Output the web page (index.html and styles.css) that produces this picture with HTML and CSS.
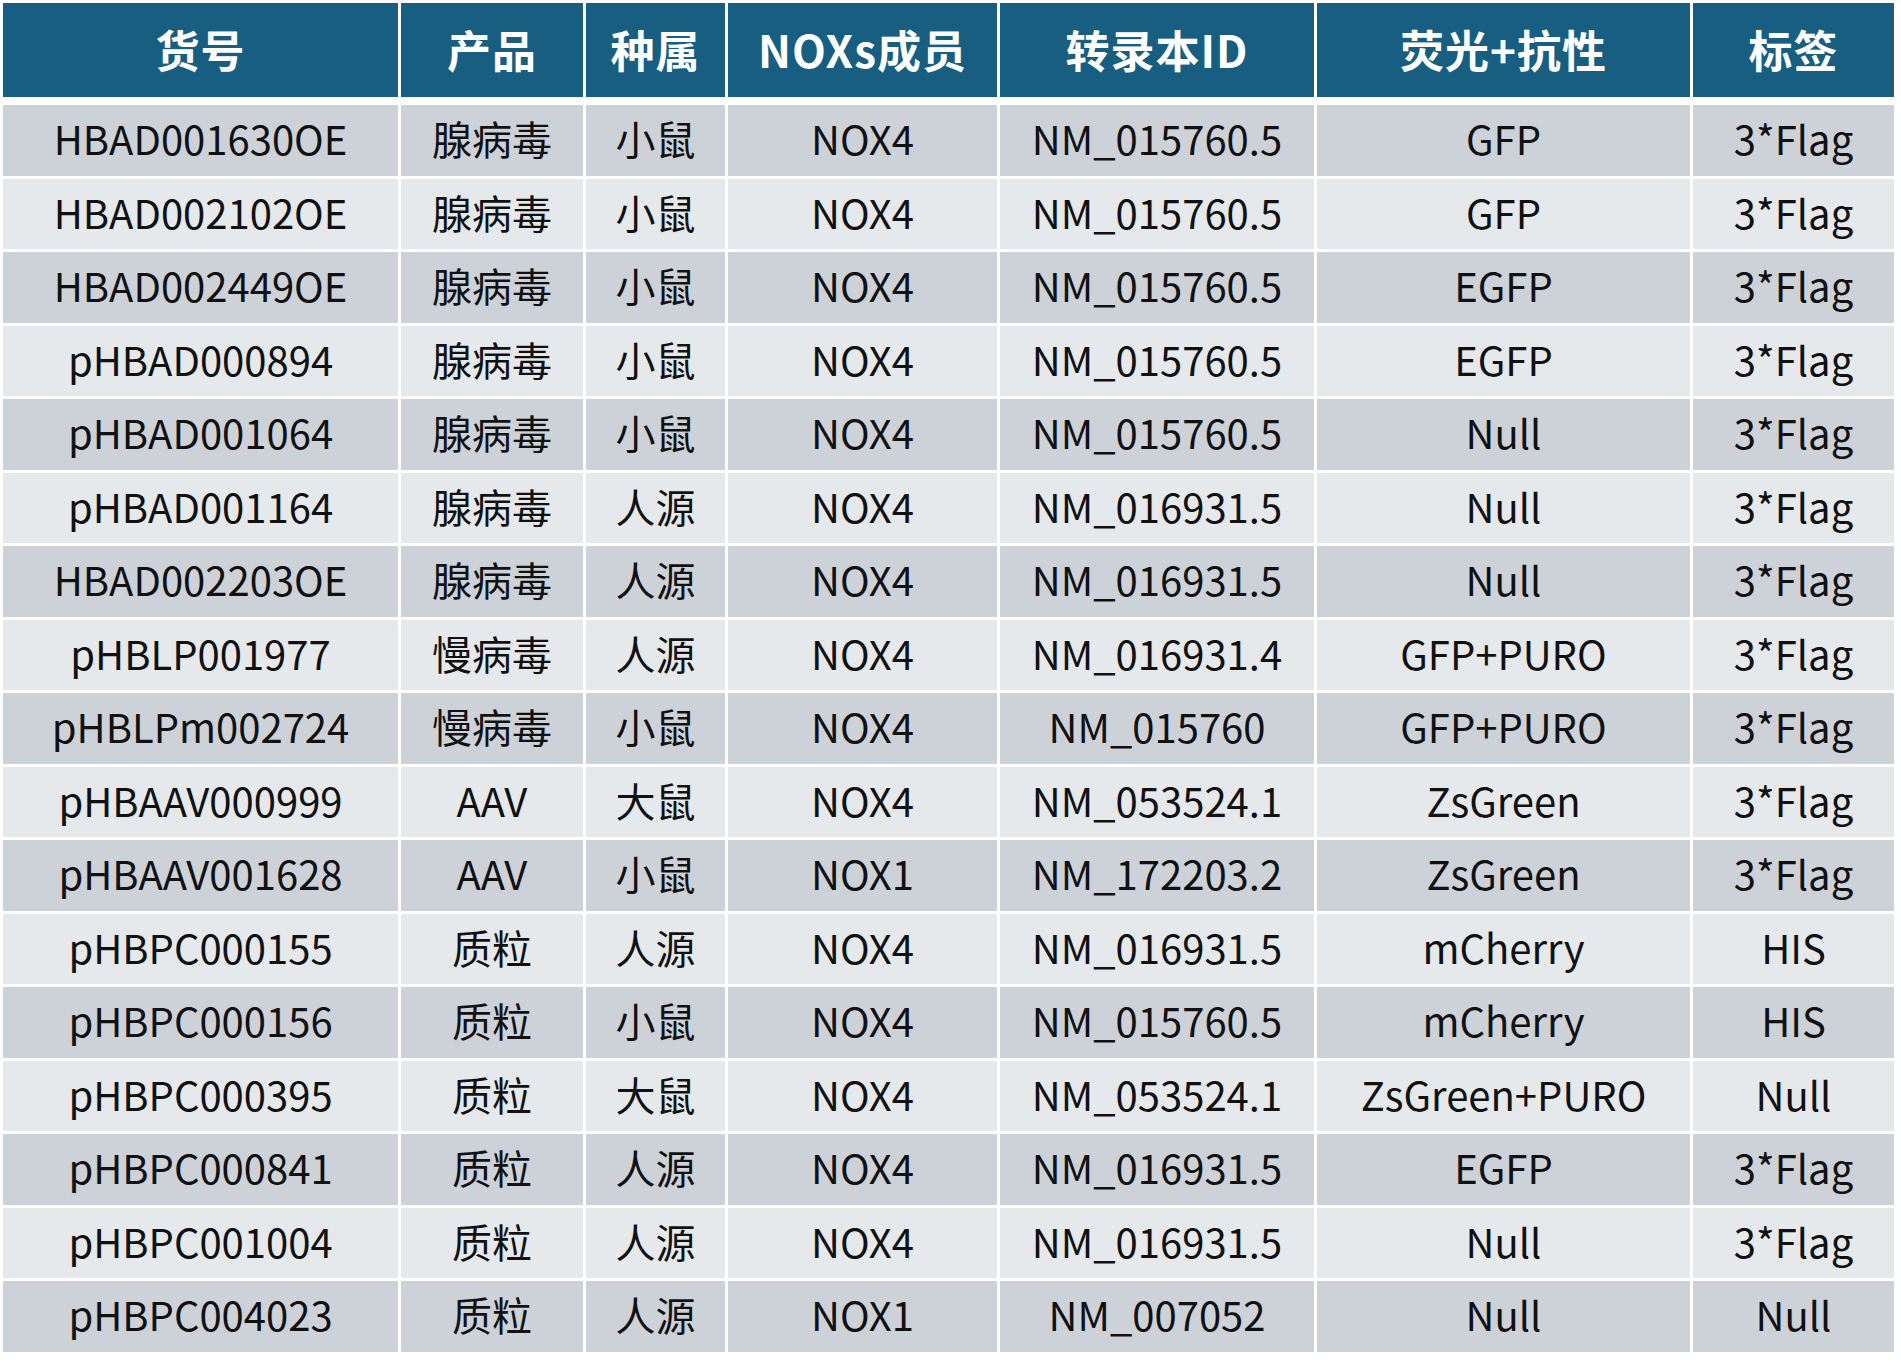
FILE: index.html
```html
<!DOCTYPE html>
<html lang="zh">
<head>
<meta charset="utf-8">
<title>NOX 产品列表</title>
<link rel="stylesheet" href="styles.css">
</head>
<body>
<div class="table">
  <div class="th">货号</div><div class="th">产品</div><div class="th">种属</div><div class="th">NOXs成员</div><div class="th">转录本ID</div><div class="th">荧光+抗性</div><div class="th">标签</div>

  <div class="td d">HBAD001630OE</div><div class="td d">腺病毒</div><div class="td d">小鼠</div><div class="td d">NOX4</div><div class="td d">NM_015760.5</div><div class="td d">GFP</div><div class="td d">3*Flag</div>
  <div class="td l">HBAD002102OE</div><div class="td l">腺病毒</div><div class="td l">小鼠</div><div class="td l">NOX4</div><div class="td l">NM_015760.5</div><div class="td l">GFP</div><div class="td l">3*Flag</div>
  <div class="td d">HBAD002449OE</div><div class="td d">腺病毒</div><div class="td d">小鼠</div><div class="td d">NOX4</div><div class="td d">NM_015760.5</div><div class="td d">EGFP</div><div class="td d">3*Flag</div>
  <div class="td l">pHBAD000894</div><div class="td l">腺病毒</div><div class="td l">小鼠</div><div class="td l">NOX4</div><div class="td l">NM_015760.5</div><div class="td l">EGFP</div><div class="td l">3*Flag</div>
  <div class="td d">pHBAD001064</div><div class="td d">腺病毒</div><div class="td d">小鼠</div><div class="td d">NOX4</div><div class="td d">NM_015760.5</div><div class="td d">Null</div><div class="td d">3*Flag</div>
  <div class="td l">pHBAD001164</div><div class="td l">腺病毒</div><div class="td l">人源</div><div class="td l">NOX4</div><div class="td l">NM_016931.5</div><div class="td l">Null</div><div class="td l">3*Flag</div>
  <div class="td d">HBAD002203OE</div><div class="td d">腺病毒</div><div class="td d">人源</div><div class="td d">NOX4</div><div class="td d">NM_016931.5</div><div class="td d">Null</div><div class="td d">3*Flag</div>
  <div class="td l">pHBLP001977</div><div class="td l">慢病毒</div><div class="td l">人源</div><div class="td l">NOX4</div><div class="td l">NM_016931.4</div><div class="td l">GFP+PURO</div><div class="td l">3*Flag</div>
  <div class="td d">pHBLPm002724</div><div class="td d">慢病毒</div><div class="td d">小鼠</div><div class="td d">NOX4</div><div class="td d">NM_015760</div><div class="td d">GFP+PURO</div><div class="td d">3*Flag</div>
  <div class="td l">pHBAAV000999</div><div class="td l">AAV</div><div class="td l">大鼠</div><div class="td l">NOX4</div><div class="td l">NM_053524.1</div><div class="td l">ZsGreen</div><div class="td l">3*Flag</div>
  <div class="td d">pHBAAV001628</div><div class="td d">AAV</div><div class="td d">小鼠</div><div class="td d">NOX1</div><div class="td d">NM_172203.2</div><div class="td d">ZsGreen</div><div class="td d">3*Flag</div>
  <div class="td l">pHBPC000155</div><div class="td l">质粒</div><div class="td l">人源</div><div class="td l">NOX4</div><div class="td l">NM_016931.5</div><div class="td l">mCherry</div><div class="td l">HIS</div>
  <div class="td d">pHBPC000156</div><div class="td d">质粒</div><div class="td d">小鼠</div><div class="td d">NOX4</div><div class="td d">NM_015760.5</div><div class="td d">mCherry</div><div class="td d">HIS</div>
  <div class="td l">pHBPC000395</div><div class="td l">质粒</div><div class="td l">大鼠</div><div class="td l">NOX4</div><div class="td l">NM_053524.1</div><div class="td l">ZsGreen+PURO</div><div class="td l">Null</div>
  <div class="td d">pHBPC000841</div><div class="td d">质粒</div><div class="td d">人源</div><div class="td d">NOX4</div><div class="td d">NM_016931.5</div><div class="td d">EGFP</div><div class="td d">3*Flag</div>
  <div class="td l">pHBPC001004</div><div class="td l">质粒</div><div class="td l">人源</div><div class="td l">NOX4</div><div class="td l">NM_016931.5</div><div class="td l">Null</div><div class="td l">3*Flag</div>
  <div class="td d">pHBPC004023</div><div class="td d">质粒</div><div class="td d">人源</div><div class="td d">NOX1</div><div class="td d">NM_007052</div><div class="td d">Null</div><div class="td d">Null</div>
</div>
</body>
</html>
```

FILE: styles.css
```css
html, body {
  margin: 0;
  padding: 0;
  background: #ffffff;
}

body {
  font-family: "Noto Sans CJK SC", "Noto Sans", sans-serif;
  color: #111111;
}

.table {
  display: grid;
  grid-template-columns: 395px 182px 139px 269px 314px 373px 201px;
  grid-template-rows: 99px;
  grid-auto-rows: 70.5px;
  column-gap: 3px;
  row-gap: 3px;
  padding: 3px;
  width: max-content;
}

.th {
  background: #175e80;
  color: #ffffff;
  font-weight: 700;
  font-size: 44px;
  display: flex;
  align-items: center;
  justify-content: center;
  margin-bottom: 5px;
  padding-bottom: 3px;
  letter-spacing: 1px;
}

.td {
  display: flex;
  align-items: center;
  justify-content: center;
  font-size: 40px;
  font-weight: 400;
  white-space: nowrap;
  padding-bottom: 4px;
}

.d {
  background: #cdd2d9;
}

.l {
  background: #e6e9ec;
}
```
